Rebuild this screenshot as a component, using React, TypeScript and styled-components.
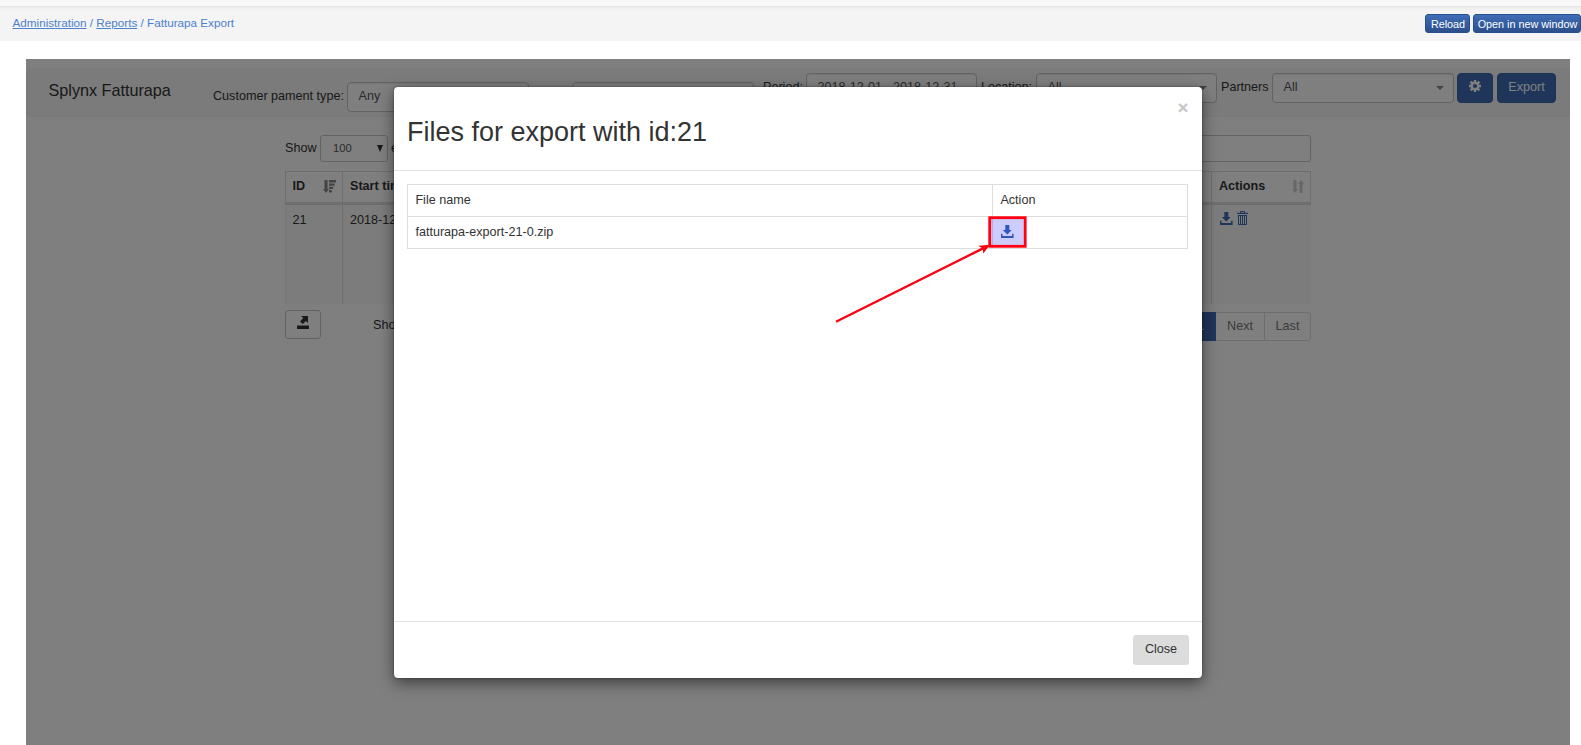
import React from 'react';
import styled, { createGlobalStyle } from 'styled-components';

const Global = createGlobalStyle`
  *, *::before, *::after { box-sizing: border-box; }
  html, body, #root { height: 100%; }
  body {
    margin: 0;
    overflow: hidden;
    background: #fff;
    color: #333;
    font: 12.6px/18px "Liberation Sans", Arial, sans-serif;
  }
`;

const Page = styled.div`
  display: flex;
  flex-direction: column;
  height: 745px;
  width: 1581px;
  overflow: hidden;
`;

const TopStrip = styled.div`
  flex: none;
  height: 6px;
  background: #f8f8f8;
`;

const Crumbs = styled.header`
  flex: none;
  display: flex;
  align-items: flex-start;
  justify-content: space-between;
  height: 35px;
  padding: 8px 0 0 12.5px;
  background: linear-gradient(#e4e4e4, #efefef 2px, #f4f4f4 6px);
  color: #4d80cd;
  font-size: 11.7px;
  line-height: 18px;
`;

const CrumbLink = styled.a`
  color: inherit;
  text-decoration: underline;
`;

const CrumbActions = styled.div`
  display: flex;
  gap: 3px;
`;

const SmallButton = styled.button<{ $width: number }>`
  flex: none;
  width: ${(p) => p.$width}px;
  height: 19px;
  padding: 1px 0 0 1px;
  border: 1px solid #27508f;
  border-radius: 3px;
  background: linear-gradient(#3f6db7, #2c4f8b);
  color: #fff;
  font: 10.8px/17px "Liberation Sans", Arial, sans-serif;
  text-align: center;
  white-space: nowrap;
`;

const Workspace = styled.main`
  position: relative;
  flex: 1;
  width: 1544px;
  margin: 18px 0 0 26px;
  padding-top: 9px;
  background: #fff;
`;

const Navbar = styled.nav`
  display: flex;
  align-items: flex-start;
  height: 49px;
  padding-left: 22.5px;
  border: 1px solid #f4f4f4;
  border-width: 1px 0;
  border-radius: 4px;
  background: #f6f6f6;
`;

const Brand = styled.div`
  width: 164.5px;
  padding-top: 11px;
  font-size: 16.2px;
  line-height: 20px;
`;

const Field = styled.div<{ $low?: boolean; $label: number; $gap: number }>`
  flex: none;
  display: grid;
  grid-template-columns: ${(p) => p.$label}px auto;
  align-items: center;
  margin: ${(p) => (p.$low ? 13 : 4)}px ${(p) => p.$gap}px 0 0;
  white-space: nowrap;
`;

const FieldLabel = styled.span`
  padding-bottom: 2px;
`;

const SelectBox = styled.div<{ $width: number }>`
  display: flex;
  align-items: center;
  justify-content: space-between;
  width: ${(p) => p.$width}px;
  height: 30px;
  padding: 0 9px 2px 10.5px;
  border: 1px solid #c6c6c6;
  border-radius: 4px;
  background: #fff;
  box-shadow: inset 0 1px 1px rgba(0, 0, 0, 0.08);
  color: #555;
`;

const Caret = styled.span`
  margin-top: 2px;
  border: 4px solid transparent;
  border-top-color: #888;
  border-bottom: 0;
`;

const PrimaryButton = styled.button<{ $width: number }>`
  flex: none;
  display: flex;
  align-items: center;
  justify-content: center;
  width: ${(p) => p.$width}px;
  height: 30px;
  margin: 4px 4px 0 0;
  padding: 0 0 2px;
  border: 1px solid #3a66ad;
  border-radius: 4px;
  background: #3e6cb5;
  color: #fff;
  font: 12.6px/18px "Liberation Sans", Arial, sans-serif;
`;

const Listing = styled.section`
  width: 1026px;
  margin: 18px 0 0 259px;
`;

const ListTools = styled.div`
  display: flex;
  align-items: center;
  height: 27px;
`;

const ShowLabel = styled.span`
  width: 35px;
  padding-bottom: 2px;
`;

const LengthSelect = styled.div`
  display: flex;
  align-items: center;
  justify-content: space-between;
  width: 68px;
  height: 27px;
  margin-right: 3px;
  padding: 0 4px 1px 12px;
  border: 1px solid #c6c6c6;
  border-radius: 3px;
  color: #555;
  font-size: 11.2px;
`;

const LengthArrow = styled.span`
  border: 3.5px solid transparent;
  border-top: 7px solid #333;
  border-bottom: 0;
`;

const SearchInput = styled.input`
  width: 180px;
  height: 27px;
  margin-left: auto;
  border: 1px solid #c6c6c6;
  border-radius: 3px;
`;

const Grid = styled.div`
  display: grid;
  grid-template-columns: 57px 1fr 100px;
  margin-top: 9px;
`;

const HeadCell = styled.div`
  display: flex;
  align-items: center;
  justify-content: space-between;
  height: 34px;
  padding: 0 6px 2px 7px;
  border: 1px solid #dcdcdc;
  border-right-width: 0;
  border-bottom: 3px solid #dcdcdc;
  font-weight: bold;
  &:first-child { padding-left: 6.5px; }
  &:nth-child(3) { border-right-width: 1px; }
`;

const Cell = styled.div`
  height: 99px;
  padding: 6px 7px;
  border-left: 1px solid #dcdcdc;
  background: #f9f9f9;
  &:nth-child(4) { padding-left: 6.5px; border-left-color: #f0f0f0; }
  &:last-child { padding-left: 8px; }
`;

const RowActions = styled.div`
  display: flex;
  align-items: flex-end;
  gap: 4px;
  color: #3e6cb5;
`;

const ListFooter = styled.div`
  display: flex;
  align-items: flex-start;
  margin-top: 6px;
`;

const ExportButton = styled.button`
  display: flex;
  align-items: flex-start;
  justify-content: center;
  width: 36px;
  height: 29px;
  margin-right: 52px;
  padding: 5px 1px 0 0;
  border: 1px solid #c6c6c6;
  border-radius: 3px;
  background: #fff;
`;

const Summary = styled.span`
  padding-top: 6px;
`;

const Pager = styled.div`
  display: flex;
  margin: 2px 0 0 auto;
`;

const PageLink = styled.span<{ $width: number; $active?: boolean }>`
  width: ${(p) => p.$width}px;
  height: 29px;
  border: 1px solid ${(p) => (p.$active ? '#3e6cb5' : '#dadada')};
  border-left-width: ${(p) => (p.$active ? 1 : 0)}px;
  background: ${(p) => (p.$active ? '#3e6cb5' : '#fff')};
  color: ${(p) => (p.$active ? '#fff' : '#777')};
  line-height: 26px;
  text-align: center;
  &:last-child { border-radius: 0 4px 4px 0; }
`;

const Backdrop = styled.div`
  position: absolute;
  inset: 0;
  background: rgba(0, 0, 0, 0.5);
`;

const Dialog = styled.div`
  position: absolute;
  left: 368px;
  top: 28px;
  display: flex;
  flex-direction: column;
  width: 808px;
  height: 591px;
  border-radius: 4px;
  background: #fff;
  box-shadow: 0 5px 15px rgba(0, 0, 0, 0.5), 0 0 2px rgba(0, 0, 0, 0.5);
`;

const DialogHeader = styled.div`
  display: flex;
  justify-content: space-between;
  height: 84px;
  padding: 0 13.5px 0 13px;
  border-bottom: 1px solid #e2e2e2;
`;

const DialogTitle = styled.h1`
  margin: 30px 0 0;
  font-size: 27px;
  font-weight: normal;
  line-height: 30px;
`;

const Dismiss = styled.span`
  margin-top: 11px;
  color: #c6c6c6;
  font-size: 18.9px;
  font-weight: bold;
  line-height: 20px;
`;

const DialogBody = styled.div`
  position: relative;
  flex: 1;
  padding: 13px 14px 0 13px;
`;

const FileTable = styled.table`
  width: 781px;
  border-collapse: collapse;
  table-layout: fixed;
`;

const FileCell = styled.td<{ $width?: number }>`
  width: ${(p) => (p.$width ? `${p.$width}px` : 'auto')};
  height: 32px;
  padding: 0 7.4px 2px;
  border: 1px solid #ddd;
`;

const Marker = styled.svg`
  position: absolute;
  left: 431px;
  top: 39px;
  overflow: visible;
`;

const DialogFooter = styled.div`
  display: flex;
  justify-content: flex-end;
  height: 57px;
  padding: 13px 13px 0 0;
  border-top: 1px solid #e2e2e2;
`;

const CloseButton = styled.button`
  width: 56px;
  height: 30px;
  padding: 0 0 2px;
  border: 0;
  border-radius: 3px;
  background: #dcdcdc;
  color: #333;
  font: 12.6px/18px "Liberation Sans", Arial, sans-serif;
`;

const IconSvg = styled.svg`
  display: block;
  flex: none;
`;

const DownloadIcon = () => (
  <IconSvg width="13" height="13" viewBox="0 0 13 13" fill="currentColor">
    <path d="M4.3 0h4v5h2.5L6.3 9.6 1.8 5h2.5zM0 8.7h1.5V11h9.6V8.7h1.5V13H0z" />
  </IconSvg>
);

const TrashIcon = () => (
  <IconSvg width="11" height="14" viewBox="0 0 11 14" fill="none" stroke="currentColor">
    <path d="M3.5 2V.6h4V2M1 4.5h9M1.5 4.5v9h8v-9M3.5 5v8M5.5 5v8M7.5 5v8" strokeWidth="1" />
    <path d="M0 2.4h11" strokeWidth="1.2" />
  </IconSvg>
);

const GearIcon = () => (
  <IconSvg width="12" height="12" viewBox="0 0 12 12" stroke="#fff">
    <circle cx="6" cy="6" r="3.3" fill="none" strokeWidth="2.5" />
    <path
      d="M6 0v2.4M6 9.6V12M0 6h2.4M9.6 6H12M1.6 1.6l1.8 1.8M8.6 8.6l1.8 1.8M10.4 1.6L8.6 3.4M3.4 8.6l-1.8 1.8"
      strokeWidth="2.4"
    />
  </IconSvg>
);

const GearSlot = styled.span`
  padding-bottom: 2px;
`;

const SortedIcon = () => (
  <IconSvg width="13" height="13" viewBox="0 0 13 13" fill="#888">
    <path d="M1.5 0h3v9H6l-3 4-3-4h1.5zM6 0h7v2.5H6zM6 3.4h5.6v2.4H6zM6 6.7h4.2v2.4H6zM6 10h2.8v2.4H6z" />
  </IconSvg>
);

const SortIcon = () => (
  <IconSvg width="12" height="13" viewBox="0 0 12 13" fill="#cfcfcf">
    <path d="M1.5 0h3v9H6l-3 4-3-4h1.5zM7.5 13h3V4H12L9 0 6 4h1.5z" />
  </IconSvg>
);

const ExportIcon = () => (
  <IconSvg width="12" height="13" viewBox="0 0 12 13" fill="#333">
    <path d="M4 0h7v7L9 5 5.8 8 3 5.5 6.2 2zM0 9.5h12V13H0z" />
  </IconSvg>
);

const FileIcon = styled.span`
  display: block;
  width: 13px;
  margin-left: 0.6px;
  padding-bottom: 1px;
  color: #3e6cb5;
`;

export default function App() {
  return (
    <>
      <Global />
      <Page>
        <TopStrip />
        <Crumbs>
          <div>
            <CrumbLink>Administration</CrumbLink> / <CrumbLink>Reports</CrumbLink> / Fatturapa Export
          </div>
          <CrumbActions>
            <SmallButton $width={45}>Reload</SmallButton>
            <SmallButton $width={108}>Open in new window</SmallButton>
          </CrumbActions>
        </Crumbs>
        <Workspace>
          <Navbar>
            <Brand>Splynx Fatturapa</Brand>
            <Field $low $label={134} $gap={43}>
              <FieldLabel>Customer pament type:</FieldLabel>
              <SelectBox $width={182}>Any</SelectBox>
            </Field>
            <Field $low $label={0} $gap={9}>
              <FieldLabel />
              <SelectBox $width={182} />
            </Field>
            <Field $label={43} $gap={4}>
              <FieldLabel>Period:</FieldLabel>
              <SelectBox $width={171}>2018-12-01 - 2018-12-31</SelectBox>
            </Field>
            <Field $label={55} $gap={4}>
              <FieldLabel>Location:</FieldLabel>
              <SelectBox $width={181}>All<Caret /></SelectBox>
            </Field>
            <Field $label={51} $gap={3}>
              <FieldLabel>Partners</FieldLabel>
              <SelectBox $width={182}>All<Caret /></SelectBox>
            </Field>
            <PrimaryButton $width={36}><GearSlot><GearIcon /></GearSlot></PrimaryButton>
            <PrimaryButton $width={59}>Export</PrimaryButton>
          </Navbar>
          <Listing>
            <ListTools>
              <ShowLabel>Show</ShowLabel>
              <LengthSelect>100<LengthArrow /></LengthSelect>
              <ShowLabel>entries</ShowLabel>
              <SearchInput />
            </ListTools>
            <Grid>
              <HeadCell>ID<SortedIcon /></HeadCell>
              <HeadCell>Start time</HeadCell>
              <HeadCell>Actions<SortIcon /></HeadCell>
              <Cell>21</Cell>
              <Cell>2018-12</Cell>
              <Cell>
                <RowActions><DownloadIcon /><TrashIcon /></RowActions>
              </Cell>
            </Grid>
            <ListFooter>
              <ExportButton><ExportIcon /></ExportButton>
              <Summary>Showing</Summary>
              <Pager>
                <PageLink $width={31} $active>1</PageLink>
                <PageLink $width={49}>Next</PageLink>
                <PageLink $width={46}>Last</PageLink>
              </Pager>
            </ListFooter>
          </Listing>
          <Backdrop />
          <Dialog>
            <DialogHeader>
              <DialogTitle>Files for export with id:21</DialogTitle>
              <Dismiss>×</Dismiss>
            </DialogHeader>
            <DialogBody>
              <FileTable>
                <tbody>
                  <tr>
                    <FileCell $width={585}>File name</FileCell>
                    <FileCell>Action</FileCell>
                  </tr>
                  <tr>
                    <FileCell>fatturapa-export-21-0.zip</FileCell>
                    <FileCell><FileIcon><DownloadIcon /></FileIcon></FileCell>
                  </tr>
                </tbody>
              </FileTable>
              <Marker width="210" height="120" viewBox="0 0 210 120">
                <rect x="164.7" y="7.7" width="35.5" height="28.6" fill="rgba(0,0,255,0.2)" stroke="#ff0010" strokeWidth="2.8" />
                <path d="M11 111.7L158 38.4" stroke="#ff0010" strokeWidth="2.3" />
                <path d="M165 34.7L158.3 43.6 157.7 38.4 153.3 35.8z" fill="#ff0010" />
              </Marker>
            </DialogBody>
            <DialogFooter>
              <CloseButton>Close</CloseButton>
            </DialogFooter>
          </Dialog>
        </Workspace>
      </Page>
    </>
  );
}
